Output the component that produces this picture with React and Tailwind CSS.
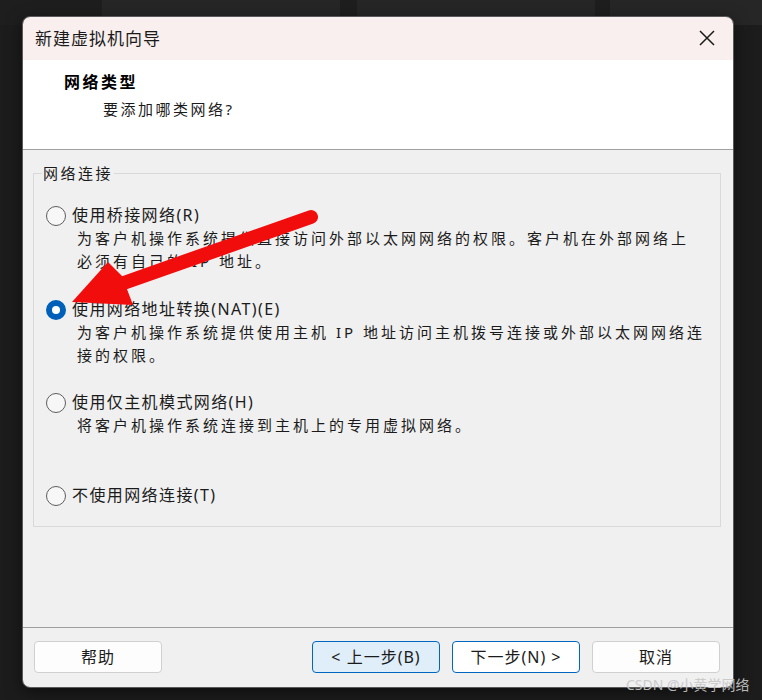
import React from "react";

const FONT = { fontFamily: '"Noto Sans", "Noto Sans CJK SC", sans-serif' };
const CJK = { fontFamily: '"Noto Sans CJK SC", sans-serif' };

function Radio({ checked }) {
  return checked ? (
    <span className="w-[20px] h-[20px] rounded-full bg-[#005fb8] flex items-center justify-center shrink-0">
      <span className="w-[8px] h-[8px] rounded-full bg-white" />
    </span>
  ) : (
    <span className="w-[20px] h-[20px] rounded-full border-[1.5px] border-[#5d5d5d] bg-[#f7f7f7] shrink-0" />
  );
}

function Option({ checked, label, lines, minLines = 0, mt = "mt-0" }) {
  return (
    <div className={mt}>
      <div className="flex items-center gap-[6px] h-[23px]">
        <Radio checked={checked} />
        <span className="text-[16px] leading-[23px] tracking-[1.4px] text-[#1b1b1b]">{label}</span>
      </div>
      {lines.length > 0 && (
        <div
          className={`pl-[31px] text-[15px] leading-[23px] tracking-[3px] text-[#1b1b1b] ${minLines === 2 ? "min-h-[46px]" : ""}`}
        >
          {lines.map((l, i) => (
            <div key={i}>{l}</div>
          ))}
        </div>
      )}
    </div>
  );
}

function Btn({ children, variant }) {
  const cls =
    variant === "focus"
      ? "bg-[#e0eef9] border-[#0067c0]"
      : variant === "primary"
      ? "bg-white border-[#0067c0]"
      : "bg-[#fdfdfd] border-[#d0d0d0]";
  return (
    <div
      className={`w-[128px] h-[32px] rounded-[4px] border flex items-center justify-center text-[16px] text-[#1b1b1b] tracking-[1px] ${cls}`}
    >
      {children}
    </div>
  );
}

export default function App() {
  return (
    <div className="relative w-[762px] h-[700px] bg-[#1c1c1c] overflow-hidden" style={FONT}>
      {/* background windows strip */}
      <div className="absolute top-0 left-0 w-[762px] h-[25px] flex">
        <div className="w-[102px] bg-[#1e1e1e]" />
        <div className="w-[238px] bg-[#262626]" />
        <div className="w-[17px] bg-[#1e1e1e]" />
        <div className="w-[238px] bg-[#262626]" />
        <div className="w-[15px] bg-[#1e1e1e]" />
        <div className="flex-1 bg-[#262626]" />
      </div>

      <div className="relative pt-[16px] pl-[22px]">
        <div className="w-[712px] h-[672px] rounded-[8px] border border-[#5a5a5a] overflow-hidden flex flex-col shadow-[0_4px_16px_rgba(0,0,0,0.5)]">
          {/* title bar */}
          <div className="h-[43px] bg-[#f8efee] flex items-center justify-between pl-[12px] pr-[17px] pb-[2px]">
            <span className="text-[17px] tracking-[1px] text-[#1a1a1a]" style={CJK}>
              新建虚拟机向导
            </span>
            <svg width="18" height="18" viewBox="0 0 18 18">
              <path d="M2 2 L16 16 M16 2 L2 16" stroke="#1a1a1a" strokeWidth="1.5" />
            </svg>
          </div>

          {/* header */}
          <div className="h-[89px] bg-white pl-[41px] pt-[11px]">
            <div className="text-[16px] leading-[22px] font-bold tracking-[2.5px] text-black">网络类型</div>
            <div className="pl-[39px] mt-[5px] text-[15px] leading-[22px] tracking-[2.5px] text-[#1b1b1b]">
              要添加哪类网络?
            </div>
          </div>
          <div className="h-[1px] bg-[#a0a0a0]" />

          {/* body */}
          <div className="flex-1 bg-[#f0f0f0] pl-[10px] pt-[12px]">
            <fieldset className="w-[688px] border border-[#d9d9d9] pl-[12px] pb-[19px]">
              <legend className="ml-[-4px] px-[1px] text-[15px] leading-[22px] tracking-[2.5px] text-[#1b1b1b]">
                网络连接
              </legend>
              <div className="pt-[20px]">
                <Option
                  label="使用桥接网络(R)"
                  lines={[
                    "为客户机操作系统提供直接访问外部以太网网络的权限。客户机在外部网络上",
                    "必须有自己的 IP 地址。",
                  ]}
                />
                <Option
                  mt="mt-[25px]"
                  checked
                  label="使用网络地址转换(NAT)(E)"
                  lines={[
                    "为客户机操作系统提供使用主机 IP 地址访问主机拨号连接或外部以太网网络连",
                    "接的权限。",
                  ]}
                />
                <Option
                  mt="mt-[24px]"
                  label="使用仅主机模式网络(H)"
                  lines={["将客户机操作系统连接到主机上的专用虚拟网络。"]}
                  minLines={2}
                />
                <Option mt="mt-[24px]" label="不使用网络连接(T)" lines={[]} />
              </div>
            </fieldset>
          </div>

          {/* footer */}
          <div className="h-[1px] bg-[#a0a0a0]" />
          <div className="h-[59px] bg-[#f0f0f0] flex justify-between pl-[11px] pr-[13px] pt-[13px]">
            <Btn>帮助</Btn>
            <div className="flex gap-[12px]">
              <Btn variant="focus">&lt; 上一步(B)</Btn>
              <Btn variant="primary">下一步(N) &gt;</Btn>
              <Btn>取消</Btn>
            </div>
          </div>
        </div>
      </div>

      {/* red annotation arrow */}
      <svg className="absolute top-0 left-0 pointer-events-none" width="762" height="700">
        <line x1="311" y1="217" x2="118" y2="285" stroke="#f20d0d" strokeWidth="14" strokeLinecap="round" />
        <polygon points="72,302 108,262 122,276 133,305" fill="#f20d0d" />
      </svg>

      {/* watermark */}
      <div className="absolute left-[626px] top-[676px] whitespace-nowrap text-[14px] leading-[18px] text-[#c8c8c8] opacity-90">
        CSDN @小黄学网络
      </div>
    </div>
  );
}
